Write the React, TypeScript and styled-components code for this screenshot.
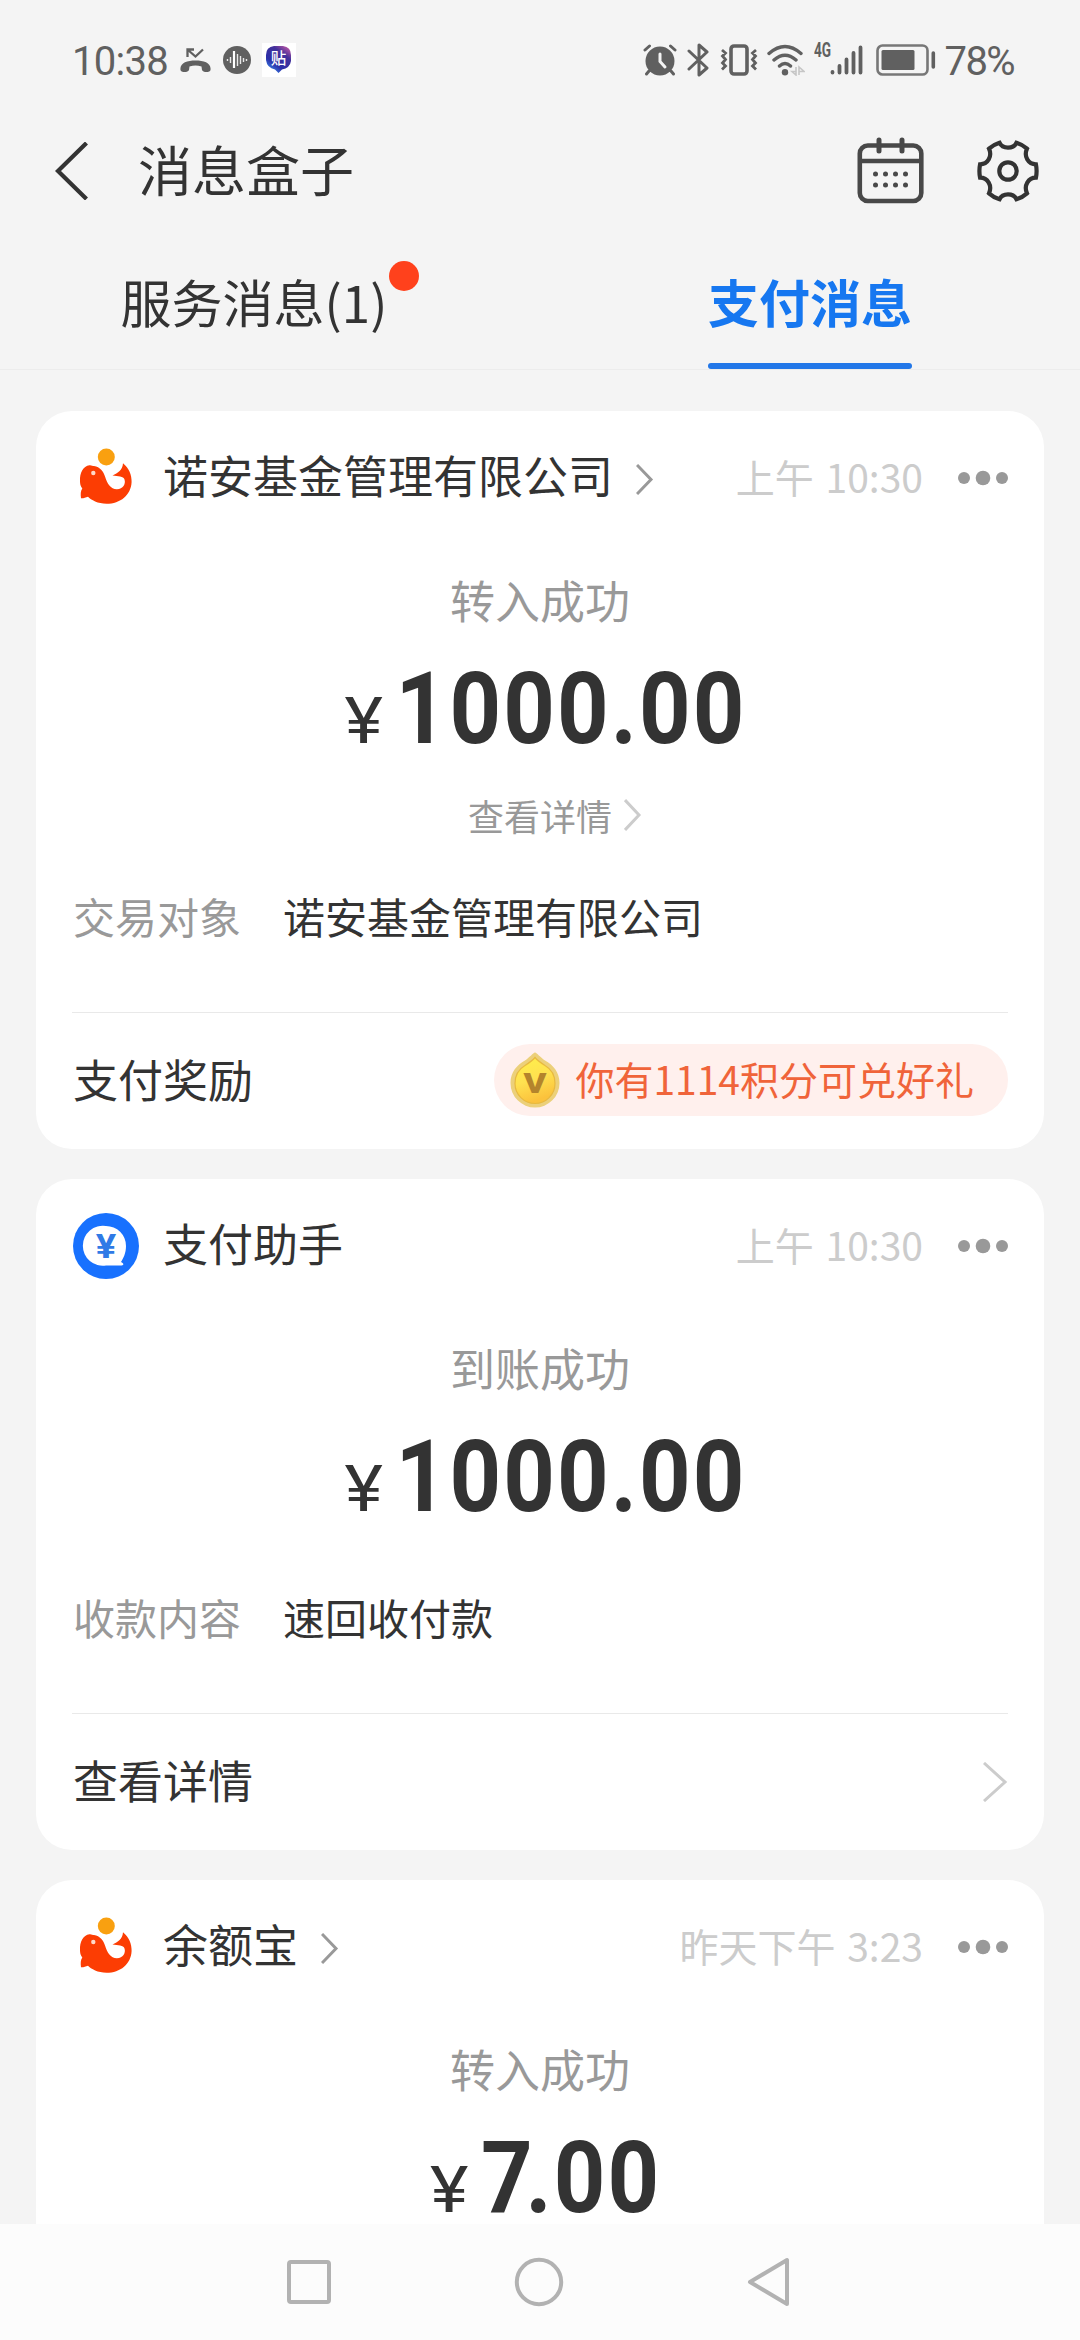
import React from "react";
import styled, { createGlobalStyle } from "styled-components";

const GlobalStyle = createGlobalStyle`
  * { box-sizing: border-box; }
  html, body { margin: 0; padding: 0; background: #f4f4f4; }
  body { font-family: "Noto Sans CJK SC", "Noto Sans", sans-serif; color: #333; }
  svg { display: block; flex: none; }
`;

const Screen = styled.div`
  width: 1080px;
  height: 2340px;
  display: flex;
  flex-direction: column;
  overflow: hidden;
  background: #f4f4f4;
`;

/* ---------- status bar ---------- */

const StatusBar = styled.div`
  height: 120px;
  flex: none;
  display: flex;
  justify-content: space-between;
  align-items: center;
  padding: 0 66px 0 72px;
  color: #606060;
`;

const StatusGroup = styled.div`
  display: flex;
  align-items: center;
`;

const Clock = styled.span<{ $spacing: number }>`
  display: block;
  font-family: Roboto, "Noto Sans", sans-serif;
  font-size: 40px;
  line-height: 44px;
  letter-spacing: ${(p) => p.$spacing}px;
  padding-top: 4px;
  white-space: nowrap;
`;

const IconSlot = styled.span<{ $left: number }>`
  display: block;
  flex: none;
  margin-left: ${(p) => p.$left}px;
`;

const NetworkLabel = styled.span`
  width: 17px;
  margin-left: 9px;
  margin-bottom: 20px;
  font: 700 20px/20px Roboto, sans-serif;
  transform: scaleX(0.68);
  transform-origin: left;
  white-space: nowrap;
`;

/* ---------- title and tabs ---------- */

const TitleBar = styled.header`
  height: 102px;
  flex: none;
  display: flex;
  align-items: center;
  padding: 0 41px 0 54px;
`;

const Title = styled.h1`
  flex: 1;
  margin: -4px 0 0 49px;
  font-size: 54px;
  line-height: 78px;
  font-weight: 400;
`;

const Tabs = styled.nav`
  height: 148px;
  flex: none;
  display: grid;
  grid-template-columns: 1fr 1fr;
  border-bottom: 1px solid #ececec;
`;

const Tab = styled.div`
  display: flex;
  justify-content: center;
`;

const TabLabel = styled.span<{ $active?: boolean }>`
  display: block;
  height: 147px;
  padding-top: 42px;
  font-size: 51px;
  line-height: 74px;
  white-space: nowrap;
  font-weight: ${(p) => (p.$active ? 700 : 400)};
  color: ${(p) => (p.$active ? "#1677f0" : "#333")};
`;

const TabBar = styled.i`
  display: block;
  height: 6px;
  margin-top: 25px;
  border-radius: 3px;
  background: #2277e8;
`;

const UnreadDot = styled.i`
  width: 30px;
  height: 30px;
  margin: 39px 0 0 2px;
  border-radius: 50%;
  background: #ff411c;
`;

/* ---------- cards ---------- */

const Feed = styled.main`
  flex: 1;
  min-height: 0;
  display: flex;
  flex-direction: column;
  gap: 30px;
  padding: 41px 36px 0;
`;

const Card = styled.section<{ $cut?: boolean }>`
  flex: ${(p) => (p.$cut ? "1 0 auto" : "none")};
  padding: 0 36px;
  border-radius: ${(p) => (p.$cut ? "36px 36px 0 0" : "36px")};
  background: #fff;
`;

const CardHead = styled.div`
  height: 134px;
  display: flex;
  align-items: center;
`;

const Logo = styled.span`
  display: block;
  width: 66px;
  margin: 0 24px 0 1px;
`;

const Sender = styled.span`
  font-size: 45px;
  line-height: 64px;
  margin: -7px 23px 0 0;
  white-space: nowrap;
`;

const SenderArrow = styled.span`
  margin-top: 3px;
`;

const Time = styled.span`
  margin: -4px 35px 0 auto;
  font-size: 39px;
  line-height: 56px;
  word-spacing: 3px;
  color: #ccc;
  white-space: nowrap;
`;

const StatusLine = styled.div`
  height: 87px;
  padding-top: 22px;
  font-size: 45px;
  line-height: 65px;
  text-align: center;
  color: #999;
`;

const Amount = styled.div`
  height: 120px;
  display: flex;
  justify-content: center;
  align-items: baseline;
  font-family: Roboto, sans-serif;
  line-height: 86px;
  padding: 34px 0 0 13px;
  transform: scaleX(0.9);
`;

const Currency = styled.span`
  font-size: 65px;
  font-weight: 400;
  margin: 0 18px 0 4px;
  transform: scaleX(1.25);
`;

const Digits = styled.span`
  font-size: 100px;
  font-weight: 700;
  letter-spacing: 2.4px;
`;

const TightDigit = styled.span`
  letter-spacing: -8px;
`;

const DetailLink = styled.div`
  display: flex;
  justify-content: center;
  align-items: center;
  gap: 12px;
  height: 52px;
  margin-top: 37px;
  padding-left: 30px;
  font-size: 36px;
  line-height: 52px;
  color: #999;
`;

const Field = styled.div<{ $top: number }>`
  display: flex;
  gap: 42px;
  margin-top: ${(p) => p.$top}px;
  padding-left: 1px;
  font-size: 42px;
  line-height: 60px;
  white-space: nowrap;
`;

const FieldName = styled.span`
  color: #999;
`;

const CardFoot = styled.div`
  height: 137px;
  margin-top: 66px;
  display: flex;
  justify-content: space-between;
  align-items: center;
  border-top: 1px solid #e9e9e9;
`;

const FootLabel = styled.span`
  padding-left: 1px;
  margin-top: -4px;
  font-size: 45px;
  line-height: 64px;
`;

const Reward = styled.span`
  display: flex;
  align-items: center;
  height: 72px;
  margin-bottom: 2px;
  padding: 0 34px 0 16px;
  border-radius: 36px;
  background: #fff0ed;
  color: #f0643a;
  font-size: 39px;
  line-height: 56px;
  white-space: nowrap;
`;

const RewardText = styled.span`
  margin: -4px 0 0 15px;
`;

const SystemNav = styled.footer`
  height: 116px;
  flex: none;
  display: flex;
  align-items: center;
  justify-content: center;
  gap: 183px;
  padding-right: 2px;
  background: #fcfcfc;
`;

/* ---------- icons ---------- */

const Chevron = ({ w, h, color, stroke = 3 }: { w: number; h: number; color: string; stroke?: number }) => (
  <svg width={w} height={h} viewBox={`0 0 ${w} ${h}`} fill="none" stroke={color} strokeWidth={stroke}>
    <path d={`M1 1 L${w - 3} ${h / 2} L1 ${h - 1}`} />
  </svg>
);

const More = () => (
  <svg width="50" height="16" viewBox="0 0 50 16" fill="#999">
    <circle cx="6" cy="8" r="6" />
    <circle cx="25" cy="8" r="7.3" />
    <circle cx="44" cy="8" r="6" />
  </svg>
);

const WhaleLogo = () => (
  <svg width="66" height="66" viewBox="0 0 66 66">
    <path
      fill="#fc3d03"
      d="M7 36C6.600 28 10 21 16.500 20.200C18.500 20 19.500 21 21 21C27 22 30.500 26.500 32.200 32C34 38.500 38 44.500 44 44.300C50 43.800 53 39 51.500 34.500C50.500 31 45 31.500 39.500 30.500C45 28 49.500 25 50 18.200C56 23 58.800 30 58.600 37C58 50 47.500 58.800 33.500 58.800C25 58.800 18 55 15 51.800C12.500 52.500 10.500 53.500 8 53.300C7.500 49 7.500 46 9.300 43.500C7.500 41 7 39 7 36Z"
    />
    <circle cx="33.300" cy="12" r="8.500" fill="#f9a010" />
    <circle cx="20.300" cy="28" r="2.200" fill="#ffd9c9" />
  </svg>
);

const PayLogo = () => (
  <svg width="66" height="66" viewBox="0 0 66 66">
    <circle cx="33" cy="33" r="33" fill="#1871fe" />
    <path fill="#fff" d="M33 13a20 20 0 1 0 0 39.500H48.500C51.500 52 50.500 50 48 49C50.500 45 53 40 53 33A20 20 0 0 0 33 13Z" />
    <text x="33" y="45" textAnchor="middle" fontFamily="Roboto, sans-serif" fontSize="33" fontWeight="700" textLength="20.500" lengthAdjust="spacingAndGlyphs" fill="#2f7ae6">
      ¥
    </text>
  </svg>
);

const Coin = () => (
  <svg width="50" height="56" viewBox="0 0 50 56">
    <defs>
      <linearGradient id="coin" x1="0" y1="0" x2="0.300" y2="1">
        <stop offset="0" stopColor="#fff04a" />
        <stop offset="0.550" stopColor="#ffe150" />
        <stop offset="1" stopColor="#fbc23c" />
      </linearGradient>
    </defs>
    <path fill="#ecd07a" d="M25 .5C27 1 30 5 35 8.500C43 13 49.500 20 49.500 31A24.500 24.500 0 0 1 .5 31C.5 20 7 13 15 8.500C20 5 23 1 25 .5Z" />
    <path fill="url(#coin)" stroke="#e8b93f" strokeWidth="1.200" d="M25 5.500C28 9 31 11 35 13.500C41 17 45 23 45 31.500A20 20 0 0 1 5 31.500C5 23 9 17 15 13.500C19 11 22 9 25 5.500Z" />
    <text x="25" y="41" textAnchor="middle" fontFamily="Roboto, sans-serif" fontSize="27" fontWeight="900" textLength="23" lengthAdjust="spacingAndGlyphs" fill="#b4842c">
      V
    </text>
  </svg>
);

const Calendar = () => (
  <svg width="68" height="68" viewBox="0 0 68 68" fill="none" stroke="#484848" strokeWidth="4.600">
    <rect x="2.800" y="8.500" width="61.500" height="55.500" rx="8" />
    <path d="M3 24H64" />
    <path d="M22 3V14M45 3V14" strokeWidth="5" strokeLinecap="round" />
    <g fill="#484848" stroke="none">
      {[18.500, 28.500, 38.500, 48.500].map((x) => (
        <React.Fragment key={x}>
          <circle cx={x} cy="37" r="2.500" />
          <circle cx={x} cy="48" r="2.500" />
        </React.Fragment>
      ))}
    </g>
  </svg>
);

const Gear = () => (
  <svg width="62" height="62" viewBox="0 0 62 62" fill="none" stroke="#333" strokeWidth="4.200">
    <path d="M22.500 2.700C25.500 9.300 36.500 9.300 39.500 2.700Q45 4.300 50 8.700C46.500 16.500 51.300 24.300 58.900 24.300Q60.300 31 58.900 37.700C51.300 37.700 46.500 45.500 50 53.300Q45 57.700 39.500 59.300C36.500 52.700 25.500 52.700 22.500 59.300Q17 57.700 12 53.300C15.500 45.500 10.700 37.700 3.100 37.700Q1.700 31 3.100 24.300C10.700 24.300 15.500 16.500 12 8.700Q17 4.300 22.500 2.700Z" />
    <circle cx="31" cy="31" r="8.700" />
  </svg>
);

const MissedCall = () => (
  <svg width="31" height="28" viewBox="0 0 31 28" fill="#606060">
    <path d="M.5 24C-.5 17 7 14.500 15.500 14.500S31.500 17 30.500 24C30 27 22.500 26.500 22 24L21.500 20.500Q15.500 18.500 9.500 20.500L9 24C8.500 26.500 1 27 .5 24Z" />
    <path d="M7.500 11V3.500H14M8 4L15.500 10.500L23 3.500" fill="none" stroke="#606060" strokeWidth="2.300" />
  </svg>
);

const VoiceWave = () => (
  <svg width="28" height="28" viewBox="0 0 28 28">
    <circle cx="14" cy="14" r="14" fill="#606060" />
    <path d="M4.500 13v2M7.500 11v6M14.500 8v12M17.500 10v8M20.500 12v4M23.500 13v2" stroke="#e8e8e8" strokeWidth="1.400" />
    <path d="M11 5v17" stroke="#fff" strokeWidth="2.200" />
  </svg>
);

const StickerApp = () => (
  <svg width="34" height="34" viewBox="0 0 34 34">
    <defs>
      <linearGradient id="sticker" x1="0.900" y1="0" x2="0.200" y2="1">
        <stop offset="0" stopColor="#c95aa5" />
        <stop offset="0.300" stopColor="#43319b" />
        <stop offset="0.700" stopColor="#2b2fa8" />
        <stop offset="1" stopColor="#3d8ff0" />
      </linearGradient>
    </defs>
    <rect width="34" height="34" fill="#fff" />
    <path fill="url(#sticker)" d="M12 3H21Q29 4 29 12V18Q28 25 20 26.500L16.500 30L13 26.500Q5 25 4 17V12Q4 4 12 3Z" />
    <text x="16.500" y="20.500" textAnchor="middle" fontSize="15.500" fontWeight="500" fill="#fff" fontFamily="'Noto Sans CJK SC', sans-serif">
      贴
    </text>
  </svg>
);

const Alarm = () => (
  <svg width="34" height="32" viewBox="0 0 34 32" fill="none" stroke="#606060" strokeLinecap="round">
    <circle cx="17" cy="17" r="14.500" fill="#606060" stroke="none" />
    <path d="M2 6L6.500 2M32 6L27.500 2M6 27L3.500 30M28 27L30.500 30" strokeWidth="3" />
    <path d="M17 10V17.500L22 23" stroke="#f4f4f4" strokeWidth="3" />
  </svg>
);

const Bluetooth = () => (
  <svg width="22" height="34" viewBox="0 0 22 34" fill="none" stroke="#606060" strokeWidth="3" strokeLinejoin="round" strokeLinecap="round">
    <path d="M2 8L20 25L12 32V2L20 9L2 26" />
  </svg>
);

const Vibrate = () => (
  <svg width="38" height="32" viewBox="0 0 38 32" fill="none" stroke="#606060">
    <rect x="11" y="2" width="16" height="28" rx="3" strokeWidth="3.600" />
    <path d="M2 6L5.500 9L2.500 12L5.500 15.500L2.500 19L5.500 22L2 25.500M36 6L32.500 9L35.500 12L32.500 15.500L35.500 19L32.500 22L36 25.500" strokeWidth="2.800" />
  </svg>
);

const Wifi = () => (
  <svg width="38" height="32" viewBox="0 0 38 32" fill="none" stroke="#606060" strokeWidth="3.400" strokeLinecap="round">
    <path d="M2 9.500Q18 -4.500 34 9.500M7 16Q18 6.500 29 16M12.500 22Q18 17 23.500 22" />
    <circle cx="18" cy="28.300" r="3.200" fill="#606060" stroke="none" />
    <path d="M29 23V31L25 27.500H29M32 31V23L37 27.500H32" stroke="#c6c6c6" strokeWidth="1.600" strokeLinecap="butt" />
  </svg>
);

const Signal = () => (
  <svg width="34" height="32" viewBox="0 0 34 32" stroke="#606060" strokeWidth="3.800" strokeLinecap="round">
    <path d="M2.500 28V28.500M9.500 22V28.500M16.500 15.500V28.500M23.500 9V28.500M30.500 3.500V28.500" />
  </svg>
);

const Battery = () => (
  <svg width="60" height="32" viewBox="0 0 60 32" fill="none">
    <rect x="1.500" y="1.500" width="50" height="29" rx="5" stroke="#777" strokeWidth="2.600" />
    <rect x="5.500" y="6" width="33" height="20" rx="1.500" fill="#606060" />
    <path d="M57.300 9V23" stroke="#606060" strokeWidth="3.600" strokeLinecap="round" />
  </svg>
);

/* ---------- page ---------- */

interface Message {
  logo: React.ReactNode;
  sender: string;
  linked?: boolean;
  time: string;
  status: string;
  amount: string;
  detail?: boolean;
  field: [string, string];
  foot: string;
  reward?: string;
}

const messages: Message[] = [
  {
    logo: <WhaleLogo />,
    sender: "诺安基金管理有限公司",
    linked: true,
    time: "上午 10:30",
    status: "转入成功",
    amount: "1000.00",
    detail: true,
    field: ["交易对象", "诺安基金管理有限公司"],
    foot: "支付奖励",
    reward: "你有1114积分可兑好礼",
  },
  {
    logo: <PayLogo />,
    sender: "支付助手",
    time: "上午 10:30",
    status: "到账成功",
    amount: "1000.00",
    field: ["收款内容", "速回收付款"],
    foot: "查看详情",
  },
];

const latest = {
  logo: <WhaleLogo />,
  sender: "余额宝",
  linked: true,
  time: "昨天下午 3:23",
  status: "转入成功",
  amount: "7.00",
};

type Summary = Pick<Message, "logo" | "sender" | "linked" | "time" | "status" | "amount">;

/* A 7 leaves a gap before the decimal point, so it is set tighter. */
const AmountDigits = ({ value }: { value: string }) => {
  const [whole, cents] = value.split(".");
  if (!whole.endsWith("7")) return <Digits>{value}</Digits>;
  return (
    <Digits>
      {whole.slice(0, -1)}
      <TightDigit>7</TightDigit>.{cents}
    </Digits>
  );
};

const CardSummary = ({ m }: { m: Summary }) => (
  <>
    <CardHead>
      <Logo>{m.logo}</Logo>
      <Sender>{m.sender}</Sender>
      {m.linked && (
        <SenderArrow>
          <Chevron w={18} h={31} color="#999" />
        </SenderArrow>
      )}
      <Time>{m.time}</Time>
      <More />
    </CardHead>
    <StatusLine>{m.status}</StatusLine>
    <Amount>
      <Currency>¥</Currency>
      <AmountDigits value={m.amount} />
    </Amount>
  </>
);

export default function App() {
  return (
    <>
      <GlobalStyle />
      <Screen>
        <StatusBar>
          <StatusGroup>
            <Clock $spacing={-0.700}>10:38</Clock>
            <IconSlot $left={12}><MissedCall /></IconSlot>
            <IconSlot $left={12}><VoiceWave /></IconSlot>
            <IconSlot $left={11}><StickerApp /></IconSlot>
          </StatusGroup>
          <StatusGroup>
            <Alarm />
            <IconSlot $left={10}><Bluetooth /></IconSlot>
            <IconSlot $left={11}><Vibrate /></IconSlot>
            <IconSlot $left={9}><Wifi /></IconSlot>
            <NetworkLabel>4G</NetworkLabel>
            <IconSlot $left={-1}><Signal /></IconSlot>
            <IconSlot $left={12}><Battery /></IconSlot>
            <IconSlot $left={9}><Clock $spacing={-1.600}>78%</Clock></IconSlot>
          </StatusGroup>
        </StatusBar>
        <TitleBar>
          <svg width="35" height="58" viewBox="0 0 35 58" fill="none" stroke="#333" strokeWidth="4.200">
            <path d="M32.500 1L4 29L32.500 57" />
          </svg>
          <Title>消息盒子</Title>
          <Calendar />
          <IconSlot $left={52}><Gear /></IconSlot>
        </TitleBar>
        <Tabs>
          <Tab>
            <TabLabel>服务消息(1)</TabLabel>
            <UnreadDot />
          </Tab>
          <Tab>
            <TabLabel $active>
              支付消息
              <TabBar />
            </TabLabel>
          </Tab>
        </Tabs>
        <Feed>
          {messages.map((m) => (
            <Card key={m.sender}>
              <CardSummary m={m} />
              {m.detail && (
                <DetailLink>
                  查看详情
                  <Chevron w={18} h={32} color="#ccc" />
                </DetailLink>
              )}
              <Field $top={m.detail ? 45 : 67}>
                <FieldName>{m.field[0]}</FieldName>
                <span>{m.field[1]}</span>
              </Field>
              <CardFoot>
                <FootLabel>{m.foot}</FootLabel>
                {m.reward ? (
                  <Reward>
                    <Coin />
                    <RewardText>{m.reward}</RewardText>
                  </Reward>
                ) : (
                  <Chevron w={25} h={40} color="#ccc" />
                )}
              </CardFoot>
            </Card>
          ))}
          <Card $cut>
            <CardSummary m={latest} />
          </Card>
        </Feed>
        <SystemNav>
          <svg width="44" height="44" viewBox="0 0 44 44" fill="none" stroke="#b2b2b2" strokeWidth="4">
            <rect x="2" y="2" width="40" height="40" rx="2" />
          </svg>
          <svg width="50" height="50" viewBox="0 0 50 50" fill="none" stroke="#b2b2b2" strokeWidth="4">
            <circle cx="25" cy="25" r="22.200" />
          </svg>
          <svg width="44" height="50" viewBox="0 0 44 50" fill="none" stroke="#b2b2b2" strokeWidth="4" strokeLinejoin="round">
            <path d="M40 3V47L3 25Z" />
          </svg>
        </SystemNav>
      </Screen>
    </>
  );
}
